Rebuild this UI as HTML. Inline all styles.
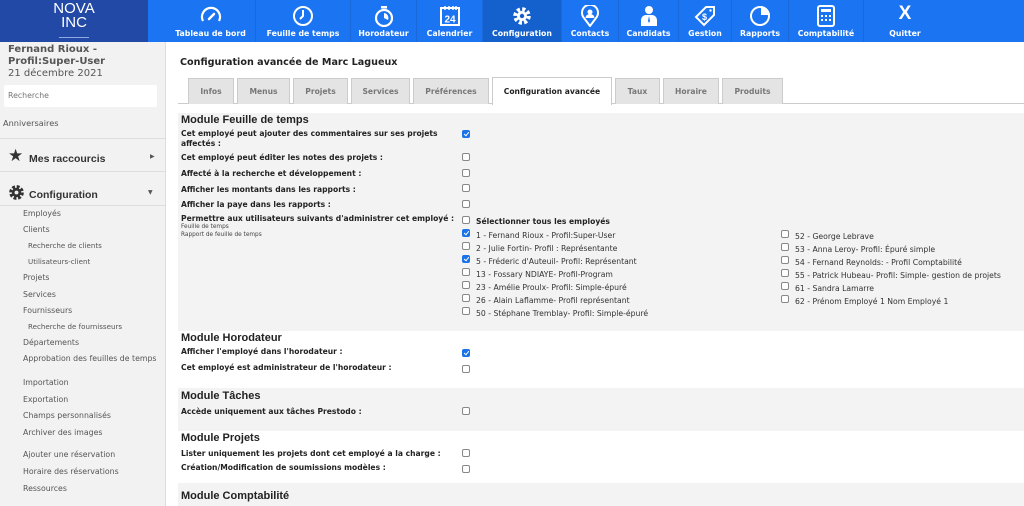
<!DOCTYPE html>
<html><head><meta charset="utf-8"><style>
*{margin:0;padding:0;box-sizing:border-box}
body{width:1024px;height:506px;overflow:hidden;background:#fff;font-family:"DejaVu Sans","Liberation Sans",sans-serif;position:relative;color:#222}
.a{position:absolute;white-space:nowrap}
#top{position:absolute;left:0;top:0;width:1024px;height:42px;background:#1b74f2}
#logo{position:absolute;left:0;top:0;width:148px;height:42px;background:#2349a6;color:#fff;font-family:"Liberation Sans",sans-serif;text-align:center;font-size:15px;line-height:14px;padding-top:2px}
.nav{position:absolute;top:0;height:42px;color:#fff;font-size:7.8px;font-weight:bold;text-align:center;border-right:1px solid #1a68da}
.nav svg{position:absolute;top:5px;left:50%;margin-left:-11px}
.nav span{position:absolute;bottom:4px;left:0;right:0}
#side{position:absolute;left:0;top:42px;width:166px;height:464px;background:#f2f2f2;border-right:1px solid #ddd}
.sl{position:absolute;font-size:7.8px;color:#555;white-space:nowrap}
.ss{font-size:7.1px}
.lab{position:absolute;left:181px;font-size:7.6px;font-weight:bold;color:#222;white-space:nowrap}
.h{position:absolute;left:181px;font-family:"Liberation Sans",sans-serif;font-size:11px;font-weight:bold;color:#222}
.cb{position:absolute;width:8px;height:8px;border:1px solid #888;border-radius:2px;background:#fff}
.ck{background:#1a73e8;border-color:#1a73e8}
.ck:after{content:"";position:absolute;left:2px;top:0px;width:2px;height:4px;border:solid #fff;border-width:0 1.2px 1.2px 0;transform:rotate(40deg)}
.emp{position:absolute;font-size:7.7px;color:#333;white-space:nowrap}
.tab{position:absolute;top:78px;height:26px;background:#e4e4e4;border:1px solid #ccc;border-bottom:none;font-size:7.6px;font-weight:bold;color:#777;text-align:center;line-height:25px}
.band{position:absolute;left:178px;right:0;background:#f3f3f3}
</style></head><body>
<div id="top"></div>
<div id="logo">NOVA<br>INC<div style="width:30px;height:1px;background:#8fa8e0;margin:7px auto 0"></div></div>

<div class="nav" style="left:166px;width:90px"><svg width="22" height="20" viewBox="0 0 22 20"><path d="M3 16A9 9 0 1 1 19 16" fill="none" stroke="#fff" stroke-width="2.2"/><path d="M9 14L14 9" stroke="#fff" stroke-width="2.5" stroke-linecap="round"/></svg><span>Tableau de bord</span></div>
<div class="nav" style="left:256px;width:95px"><svg width="22" height="22" viewBox="0 0 22 22"><circle cx="11" cy="11" r="9" fill="none" stroke="#fff" stroke-width="2"/><path d="M11 5V11L8 14" fill="none" stroke="#fff" stroke-width="2"/></svg><span>Feuille de temps</span></div>
<div class="nav" style="left:351px;width:66px"><svg width="22" height="22" viewBox="0 0 22 22"><circle cx="11" cy="13" r="8" fill="none" stroke="#fff" stroke-width="2.2"/><rect x="8" y="1" width="6" height="2.5" fill="#fff"/><path d="M11 13V8A5 5 0 0 1 15 15Z" fill="#fff"/></svg><span>Horodateur</span></div>
<div class="nav" style="left:417px;width:66px"><svg width="22" height="22" viewBox="0 0 22 22"><rect x="2" y="3" width="18" height="17" fill="none" stroke="#fff" stroke-width="2"/><path d="M6 1v4M10 1v4M14 1v4M17 1v4" stroke="#fff" stroke-width="1.5"/><text x="11" y="17.5" font-size="10" font-weight="bold" fill="#fff" text-anchor="middle" font-family="Liberation Sans">24</text></svg><span>Calendrier</span></div>
<div class="nav" style="left:483px;width:79px;background:#1460cc"><svg width="22" height="22" viewBox="0 0 22 22"><circle cx="11" cy="11" r="6.5" fill="none" stroke="#fff" stroke-width="4.5" stroke-dasharray="3 2.1"/><circle cx="11" cy="11" r="5" fill="#fff"/><circle cx="11" cy="11" r="2.2" fill="#1460cc"/></svg><span>Configuration</span></div>
<div class="nav" style="left:562px;width:57px"><svg width="22" height="22" viewBox="0 0 22 22"><path d="M11 21L5 13A8 8 0 1 1 17 13Z" fill="none" stroke="#fff" stroke-width="2"/><circle cx="11" cy="7" r="2.5" fill="#fff"/><path d="M6.5 13a4.5 4 0 0 1 9 0Z" fill="#fff"/></svg><span>Contacts</span></div>
<div class="nav" style="left:619px;width:60px"><svg width="22" height="22" viewBox="0 0 22 22"><circle cx="11" cy="5" r="4" fill="#fff"/><path d="M3 21V15A5 5 0 0 1 8 10H14A5 5 0 0 1 19 15V21Z" fill="#fff"/><path d="M11 11L10 16L11 18L12 16Z" fill="#1b74f2"/></svg><span>Candidats</span></div>
<div class="nav" style="left:679px;width:53px"><svg width="22" height="22" viewBox="0 0 22 22"><path d="M12 2H20V10L10 20L2 12Z" fill="none" stroke="#fff" stroke-width="2"/><circle cx="16.5" cy="5.5" r="1.2" fill="#fff"/><text x="10.5" y="15" font-size="9" font-weight="bold" fill="#fff" text-anchor="middle" font-family="Liberation Sans">$</text></svg><span>Gestion</span></div>
<div class="nav" style="left:732px;width:57px"><svg width="22" height="22" viewBox="0 0 22 22"><circle cx="11" cy="11" r="9" fill="none" stroke="#fff" stroke-width="2"/><path d="M12 1A10 10 0 0 1 21 10H12Z" fill="#fff"/></svg><span>Rapports</span></div>
<div class="nav" style="left:789px;width:75px"><svg width="22" height="22" viewBox="0 0 22 22"><rect x="3" y="1" width="16" height="20" rx="2" fill="none" stroke="#fff" stroke-width="2"/><rect x="6" y="4" width="10" height="3" fill="#fff"/><path d="M6 10h2v2h-2zM10 10h2v2h-2zM14 10h2v2h-2zM6 14h2v2h-2zM10 14h2v2h-2zM14 14h2v2h-2z" fill="#fff"/></svg><span>Comptabilité</span></div>
<div class="nav" style="left:864px;width:82px;border:none"><div style="position:absolute;top:3px;left:0;right:0;font-size:19px;font-family:'Liberation Sans',sans-serif">X</div><span>Quitter</span></div>

<div id="side">
<div class="a" style="left:8px;top:2px;font-size:10px;font-weight:bold;color:#555;line-height:12px">Fernand Rioux -<br>Profil:Super-User</div>
<div class="a" style="left:8px;top:26px;font-size:10px;color:#555">21 décembre 2021</div>
<div class="a" style="left:4px;top:43px;width:153px;height:22px;background:#fff;border-radius:2px;font-size:7.8px;color:#777;padding:6px 0 0 4px">Recherche</div>
<div class="sl" style="left:3px;top:76px;font-size:8.2px">Anniversaires</div>
<div class="a" style="left:0;top:96px;width:165px;height:1px;background:#ddd"></div>
<div class="a" style="left:8px;top:104px;font-size:17px;color:#333">★</div>
<div class="a" style="left:29px;top:111px;font-size:10.5px;font-weight:bold;color:#333;font-family:'Liberation Sans',sans-serif">Mes raccourcis</div>
<div class="a" style="left:150px;top:111px;font-size:6px;color:#555">▶</div>
<div class="a" style="left:0;top:129px;width:165px;height:1px;background:#ddd"></div>
<svg class="a" style="left:8px;top:142px" width="17" height="17" viewBox="0 0 22 22"><circle cx="11" cy="11" r="7" fill="none" stroke="#333" stroke-width="5" stroke-dasharray="3.5 2"/><circle cx="11" cy="11" r="6" fill="#333"/><circle cx="11" cy="11" r="2.5" fill="#f2f2f2"/></svg>
<div class="a" style="left:29px;top:147px;font-size:10.5px;font-weight:bold;color:#333;font-family:'Liberation Sans',sans-serif">Configuration</div>
<div class="a" style="left:148px;top:147px;font-size:6px;color:#555">▼</div>
<div class="a" style="left:0;top:163px;width:165px;height:1px;background:#ddd"></div>
<div class="sl" style="left:23px;top:167px">Employés</div>
<div class="sl" style="left:23px;top:183px">Clients</div>
<div class="sl ss" style="left:28px;top:199px">Recherche de clients</div>
<div class="sl ss" style="left:28px;top:215px">Utilisateurs-client</div>
<div class="sl" style="left:23px;top:231px">Projets</div>
<div class="sl" style="left:23px;top:248px">Services</div>
<div class="sl" style="left:23px;top:264px">Fournisseurs</div>
<div class="sl ss" style="left:28px;top:280px">Recherche de fournisseurs</div>
<div class="sl" style="left:23px;top:296px">Départements</div>
<div class="sl" style="left:23px;top:312px">Approbation des feuilles de temps</div>
<div class="sl" style="left:23px;top:336px">Importation</div>
<div class="sl" style="left:23px;top:353px">Exportation</div>
<div class="sl" style="left:23px;top:369px">Champs personnalisés</div>
<div class="sl" style="left:23px;top:386px">Archiver des images</div>
<div class="sl" style="left:23px;top:408px">Ajouter une réservation</div>
<div class="sl" style="left:23px;top:425px">Horaire des réservations</div>
<div class="sl" style="left:23px;top:442px">Ressources</div>
</div>

<div class="a" style="left:180px;top:57px;font-size:9.6px;font-weight:bold;color:#222">Configuration avancée de Marc Lagueux</div>
<div class="a" style="left:178px;top:103px;width:846px;height:1px;background:#ccc"></div>
<div class="tab" style="left:188px;width:46px">Infos</div>
<div class="tab" style="left:237px;width:53px">Menus</div>
<div class="tab" style="left:293px;width:55px">Projets</div>
<div class="tab" style="left:351px;width:59px">Services</div>
<div class="tab" style="left:413px;width:76px">Préférences</div>
<div class="tab" style="left:492px;width:120px;top:77px;height:28px;background:#fff;color:#222;line-height:28px">Configuration avancée</div>
<div class="tab" style="left:615px;width:45px">Taux</div>
<div class="tab" style="left:663px;width:56px">Horaire</div>
<div class="tab" style="left:722px;width:61px">Produits</div>

<div class="band" style="top:113px;height:218px"></div>
<div class="band" style="top:388px;height:43px"></div>
<div class="band" style="top:483px;height:23px"></div>

<div class="h" style="top:114px">Module Feuille de temps</div>
<div class="lab" style="top:129px;line-height:10px">Cet employé peut ajouter des commentaires sur ses projets<br>affectés :</div>
<div class="cb ck" style="left:462px;top:130px"></div>
<div class="lab" style="top:153px">Cet employé peut éditer les notes des projets :</div><div class="cb" style="left:462px;top:153px"></div>
<div class="lab" style="top:169px">Affecté à la recherche et développement :</div><div class="cb" style="left:462px;top:169px"></div>
<div class="lab" style="top:185px">Afficher les montants dans les rapports :</div><div class="cb" style="left:462px;top:184px"></div>
<div class="lab" style="top:200px">Afficher la paye dans les rapports :</div><div class="cb" style="left:462px;top:200px"></div>
<div class="lab" style="top:214px">Permettre aux utilisateurs suivants d'administrer cet employé :</div><div class="cb" style="left:462px;top:216px"></div>
<div class="a" style="left:181px;top:223px;font-size:5.8px;color:#444;line-height:8px">Feuille de temps<br>Rapport de feuille de temps</div>
<div class="lab" style="left:476px;top:217px">Sélectionner tous les employés</div>
<div class="cb ck" style="left:462px;top:229px"></div><div class="emp" style="left:476px;top:231px">1 - Fernand Rioux - Profil:Super-User</div>
<div class="cb" style="left:462px;top:242px"></div><div class="emp" style="left:476px;top:244px">2 - Julie Fortin- Profil : Représentante</div>
<div class="cb ck" style="left:462px;top:255px"></div><div class="emp" style="left:476px;top:257px">5 - Fréderic d'Auteuil- Profil: Représentant</div>
<div class="cb" style="left:462px;top:268px"></div><div class="emp" style="left:476px;top:270px">13 - Fossary NDIAYE- Profil-Program</div>
<div class="cb" style="left:462px;top:281px"></div><div class="emp" style="left:476px;top:283px">23 - Amélie Proulx- Profil: Simple-épuré</div>
<div class="cb" style="left:462px;top:294px"></div><div class="emp" style="left:476px;top:296px">26 - Alain Laflamme- Profil représentant</div>
<div class="cb" style="left:462px;top:307px"></div><div class="emp" style="left:476px;top:309px">50 - Stéphane Tremblay- Profil: Simple-épuré</div>
<div class="cb" style="left:781px;top:230px"></div><div class="emp" style="left:795px;top:232px">52 - George Lebrave</div>
<div class="cb" style="left:781px;top:243px"></div><div class="emp" style="left:795px;top:245px">53 - Anna Leroy- Profil: Épuré simple</div>
<div class="cb" style="left:781px;top:256px"></div><div class="emp" style="left:795px;top:258px">54 - Fernand Reynolds: - Profil Comptabilité</div>
<div class="cb" style="left:781px;top:269px"></div><div class="emp" style="left:795px;top:271px">55 - Patrick Hubeau- Profil: Simple- gestion de projets</div>
<div class="cb" style="left:781px;top:282px"></div><div class="emp" style="left:795px;top:284px">61 - Sandra Lamarre</div>
<div class="cb" style="left:781px;top:295px"></div><div class="emp" style="left:795px;top:297px">62 - Prénom Employé 1 Nom Employé 1</div>

<div class="h" style="top:332px">Module Horodateur</div>
<div class="lab" style="top:347px">Afficher l'employé dans l'horodateur :</div><div class="cb ck" style="left:462px;top:349px"></div>
<div class="lab" style="top:363px">Cet employé est administrateur de l'horodateur :</div><div class="cb" style="left:462px;top:365px"></div>
<div class="h" style="top:390px">Module Tâches</div>
<div class="lab" style="top:407px">Accède uniquement aux tâches Prestodo :</div><div class="cb" style="left:462px;top:407px"></div>
<div class="h" style="top:432px">Module Projets</div>
<div class="lab" style="top:449px">Lister uniquement les projets dont cet employé a la charge :</div><div class="cb" style="left:462px;top:449px"></div>
<div class="lab" style="top:463px">Création/Modification de soumissions modèles :</div><div class="cb" style="left:462px;top:465px"></div>
<div class="h" style="top:490px">Module Comptabilité</div>
</body></html>
